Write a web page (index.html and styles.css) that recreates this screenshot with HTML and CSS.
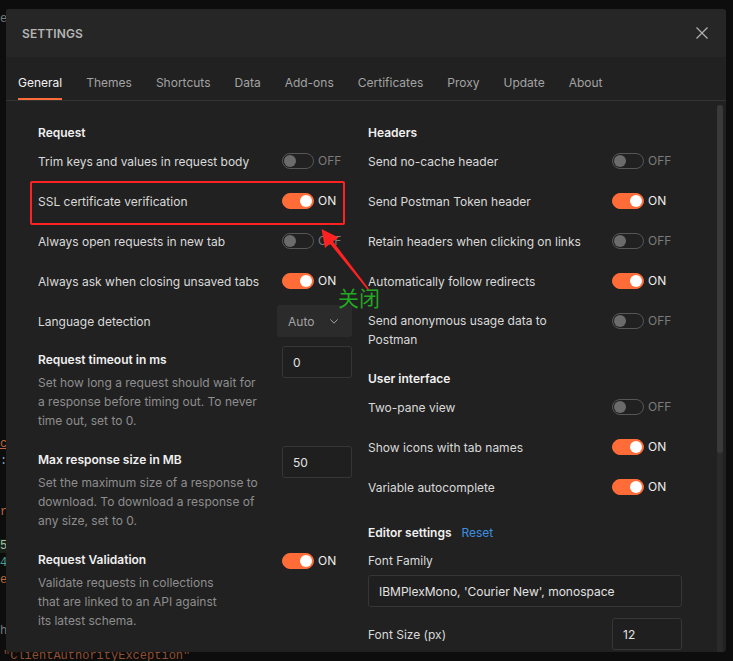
FILE: index.html
```html
<!DOCTYPE html>
<html lang="en">
<head>
<meta charset="utf-8">
<title>Settings</title>
<link rel="stylesheet" href="styles.css">
</head>
<body>
<div class="editor">
<pre class="code"><span class="c-grey">e</span>
























<span class="c-orange c-ul">c</span>
<span class="c-blue">:</span>


<span class="c-orange">r,</span>

<span class="c-band"><span class="c-green">5</span></span>
<span class="c-teal">4</span>
<span class="c-orange">e</span>


<span class="c-grey">h</span></pre>
<div class="code-last">"ClientAuthorityException"</div>
</div>

<div class="modal">
  <div class="modal-header">
    <span class="title">SETTINGS</span>
    <svg class="close" width="12" height="12" viewBox="0 0 12 12"><path d="M0.5 0.5L11.5 11.5M11.5 0.5L0.5 11.5" stroke="#b0b0b0" stroke-width="1.2" fill="none"/></svg>
  </div>
  <div class="tabs">
    <span class="tab active">General</span>
    <span class="tab">Themes</span>
    <span class="tab">Shortcuts</span>
    <span class="tab">Data</span>
    <span class="tab">Add-ons</span>
    <span class="tab">Certificates</span>
    <span class="tab">Proxy</span>
    <span class="tab">Update</span>
    <span class="tab">About</span>
  </div>
  <div class="modal-body">
    <div class="content">
      <div class="col">
        <div class="section-title">Request</div>
        <div class="row"><span class="label">Trim keys and values in request body</span><span class="toggle-wrap"><span class="toggle"><span class="knob"></span></span><span class="state">OFF</span></span></div>
        <div class="row"><span class="label">SSL certificate verification</span><span class="toggle-wrap"><span class="toggle on"><span class="knob"></span></span><span class="state on">ON</span></span></div>
        <div class="row"><span class="label">Always open requests in new tab</span><span class="toggle-wrap"><span class="toggle"><span class="knob"></span></span><span class="state">OFF</span></span></div>
        <div class="row"><span class="label">Always ask when closing unsaved tabs</span><span class="toggle-wrap"><span class="toggle on"><span class="knob"></span></span><span class="state on">ON</span></span></div>
        <div class="row"><span class="label">Language detection</span><span class="select"><span>Auto</span><svg width="8" height="5" viewBox="0 0 8 5"><path d="M0.4 0.4L4 4.2L7.6 0.4" stroke="#a0a0a0" stroke-width="1" fill="none"/></svg></span></div>
        <div class="block">
          <div class="block-text">
            <div class="block-label">Request timeout in ms</div>
            <div class="desc desc-wide">Set how long a request should wait for a response before timing out. To never time out, set to 0.</div>
          </div>
          <div class="input small">0</div>
        </div>
        <div class="block gap">
          <div class="block-text">
            <div class="block-label">Max response size in MB</div>
            <div class="desc desc-wide">Set the maximum size of a response to download. To download a response of any size, set to 0.</div>
          </div>
          <div class="input small">50</div>
        </div>
        <div class="block gap">
          <div class="block-text">
            <div class="block-label">Request Validation</div>
            <div class="desc desc-narrow">Validate requests in collections that are linked to an API against its latest schema.</div>
          </div>
          <span class="toggle-wrap block-toggle"><span class="toggle on"><span class="knob"></span></span><span class="state on">ON</span></span>
        </div>
      </div>
      <div class="col">
        <div class="section-title">Headers</div>
        <div class="row"><span class="label">Send no-cache header</span><span class="toggle-wrap"><span class="toggle"><span class="knob"></span></span><span class="state">OFF</span></span></div>
        <div class="row"><span class="label">Send Postman Token header</span><span class="toggle-wrap"><span class="toggle on"><span class="knob"></span></span><span class="state on">ON</span></span></div>
        <div class="row"><span class="label">Retain headers when clicking on links</span><span class="toggle-wrap"><span class="toggle"><span class="knob"></span></span><span class="state">OFF</span></span></div>
        <div class="row"><span class="label">Automatically follow redirects</span><span class="toggle-wrap"><span class="toggle on"><span class="knob"></span></span><span class="state on">ON</span></span></div>
        <div class="row-multi"><span class="label label-wrap">Send anonymous usage data to Postman</span><span class="toggle-wrap block-toggle2"><span class="toggle"><span class="knob"></span></span><span class="state">OFF</span></span></div>
        <div class="section-title sec-ui">User interface</div>
        <div class="row"><span class="label">Two-pane view</span><span class="toggle-wrap"><span class="toggle"><span class="knob"></span></span><span class="state">OFF</span></span></div>
        <div class="row"><span class="label">Show icons with tab names</span><span class="toggle-wrap"><span class="toggle on"><span class="knob"></span></span><span class="state on">ON</span></span></div>
        <div class="row"><span class="label">Variable autocomplete</span><span class="toggle-wrap"><span class="toggle on"><span class="knob"></span></span><span class="state on">ON</span></span></div>
        <div class="section-title sec-editor">Editor settings <span class="reset">Reset</span></div>
        <div class="field-label">Font Family</div>
        <div class="input wide">IBMPlexMono, 'Courier New', monospace</div>
        <div class="font-size-row"><span class="label">Font Size (px)</span><div class="input small">12</div></div>
      </div>
    </div>
    <div class="scrollbar"><div class="thumb"></div></div>
  </div>
</div>

<div class="annot-box"></div>
<svg class="annot-arrow" width="733" height="661" viewBox="0 0 733 661">
  <polygon points="321.5,229 338.5,237.5 333,241.5 369,289 368,290.2 330,243.8 325,248" fill="#f22"/>
</svg>
<span class="annot-text">关闭</span>
</body>
</html>
```

FILE: styles.css
```css
html, body {
  margin: 0;
  padding: 0;
}

body {
  width: 733px;
  height: 661px;
  background: #0d0d0d;
  overflow: hidden;
  position: relative;
  font-family: Inter, "Noto Sans", "Liberation Sans", sans-serif;
}

/* background editor */
.editor {
  font-family: "Liberation Mono", "DejaVu Sans Mono", monospace;
  font-size: 12px;
  height: 661px;
  overflow: hidden;
}

.code {
  margin: 0;
  padding-top: 11px;
  line-height: 17px;
  font-family: inherit;
  color: #777;
}

.c-grey { color: #7a7a7a; }
.c-orange { color: #b8693e; }
.c-ul { text-decoration: underline; }
.c-blue { color: #7aa6d0; }
.c-green { color: #a5c29a; }
.c-teal { color: #4a9e8e; }
.c-band { background: #1a211a; }

.code-last {
  margin-top: 9px;
  margin-left: 3px;
  line-height: 14px;
  color: #8f4f33;
}

/* modal */
.modal {
  position: absolute;
  left: 6px;
  top: 9px;
  width: 720px;
  height: 643px;
  background: #212121;
  border-radius: 3px;
  overflow: hidden;
  display: flex;
  flex-direction: column;
}

.modal-header {
  flex: none;
  height: 48px;
  background: #262626;
  display: flex;
  align-items: center;
  justify-content: space-between;
  padding: 0 18px 0 16px;
}

.title {
  font-size: 12px;
  font-weight: 600;
  color: #b5b5b5;
  letter-spacing: 0.1px;
}

.close {
  display: block;
}

.tabs {
  flex: none;
  display: flex;
  gap: 24px;
  padding: 17px 12px 0;
  border-bottom: 1px solid #333;
}

.tab {
  font-size: 12px;
  line-height: 18px;
  color: #a3a3a3;
  padding-bottom: 6px;
  border-bottom: 2px solid transparent;
}

.tab.active {
  color: #f2f2f2;
  border-bottom-color: #ff6c37;
}

.modal-body {
  flex: 1;
  min-height: 0;
  display: flex;
}

.content {
  flex: 1;
  overflow: hidden;
  padding: 24px 0 0 32px;
  display: grid;
  grid-template-columns: 314px 314px;
  column-gap: 16px;
  align-items: start;
}

.scrollbar {
  flex: none;
  width: 6px;
  margin: 4px 3px 0 0;
  background: #2a2a2a;
  border-radius: 3px 3px 0 0;
}

.thumb {
  height: 348px;
  background: #3a3a3a;
  border-radius: 3px;
}

.section-title {
  font-size: 12px;
  line-height: 16px;
  font-weight: 600;
  color: #f0f0f0;
}

.sec-ui { margin-top: 12px; }
.sec-editor {
  margin-top: 18px;
  display: flex;
  gap: 10px;
}

.reset {
  font-weight: 400;
  color: #3d8fe0;
}

.row {
  height: 40px;
  display: flex;
  align-items: center;
  justify-content: space-between;
}

.row-multi {
  display: flex;
  justify-content: space-between;
  align-items: flex-start;
  padding: 10px 0;
}

.label {
  font-size: 12px;
  line-height: 19px;
  color: #dadada;
}

.label-wrap {
  width: 205px;
}

.toggle-wrap {
  width: 70px;
  display: flex;
  align-items: center;
  gap: 4px;
}

.block-toggle { margin-top: 7px; }
.block-toggle2 { margin-top: 2px; }

.toggle {
  width: 32px;
  height: 16px;
  box-sizing: border-box;
  border-radius: 8px;
  border: 1px solid #565656;
  padding: 1px;
  display: flex;
  align-items: center;
  justify-content: flex-start;
}

.knob {
  width: 12px;
  height: 12px;
  border-radius: 50%;
  background: #6b6b6b;
}

.toggle.on {
  background: #ff6c37;
  border-color: #ff6c37;
  justify-content: flex-end;
}

.toggle.on .knob {
  background: #ffffff;
}

.state {
  font-size: 12px;
  line-height: 16px;
  color: #7c7c7c;
}

.state.on {
  color: #ececec;
}

.select {
  width: 75px;
  height: 32px;
  box-sizing: border-box;
  background: #2b2b2b;
  border-radius: 3px;
  display: flex;
  align-items: center;
  justify-content: space-between;
  padding: 0 14px 0 11px;
  font-size: 12px;
  color: #a3a3a3;
}

.block {
  display: flex;
  justify-content: space-between;
  align-items: flex-start;
  margin-top: 5px;
}

.block.gap {
  margin-top: 16px;
}

.block-label {
  font-size: 12px;
  line-height: 19px;
  padding-top: 4px;
  font-weight: 600;
  color: #f0f0f0;
}

.desc {
  margin-top: 4px;
  font-size: 12px;
  line-height: 19px;
  color: #8e8e8e;
}

.desc-wide { width: 223px; }
.desc-narrow { width: 188px; }

.input {
  height: 32px;
  box-sizing: border-box;
  border: 1px solid #363636;
  border-radius: 3px;
  background: #1f1f1f;
  display: flex;
  align-items: center;
  padding: 0 10px;
  font-size: 12px;
  color: #e2e2e2;
}

.input.small { width: 70px; }
.input.wide { width: 314px; margin-top: 4px; }

.field-label {
  margin-top: 10px;
  font-size: 12px;
  line-height: 20px;
  color: #dadada;
}

.font-size-row {
  margin-top: 11px;
  display: flex;
  justify-content: space-between;
  align-items: center;
}

/* annotation overlay */
.annot-box {
  position: absolute;
  left: 30px;
  top: 181px;
  width: 315px;
  height: 44px;
  box-sizing: border-box;
  border: 2px solid #f22;
  border-radius: 2px;
}

.annot-arrow {
  position: absolute;
  left: 0;
  top: 0;
  pointer-events: none;
}

.annot-text {
  position: absolute;
  left: 338px;
  top: 286px;
  font-family: "Noto Sans CJK SC", sans-serif;
  font-size: 21px;
  line-height: 22px;
  color: #22a822;
}
```
